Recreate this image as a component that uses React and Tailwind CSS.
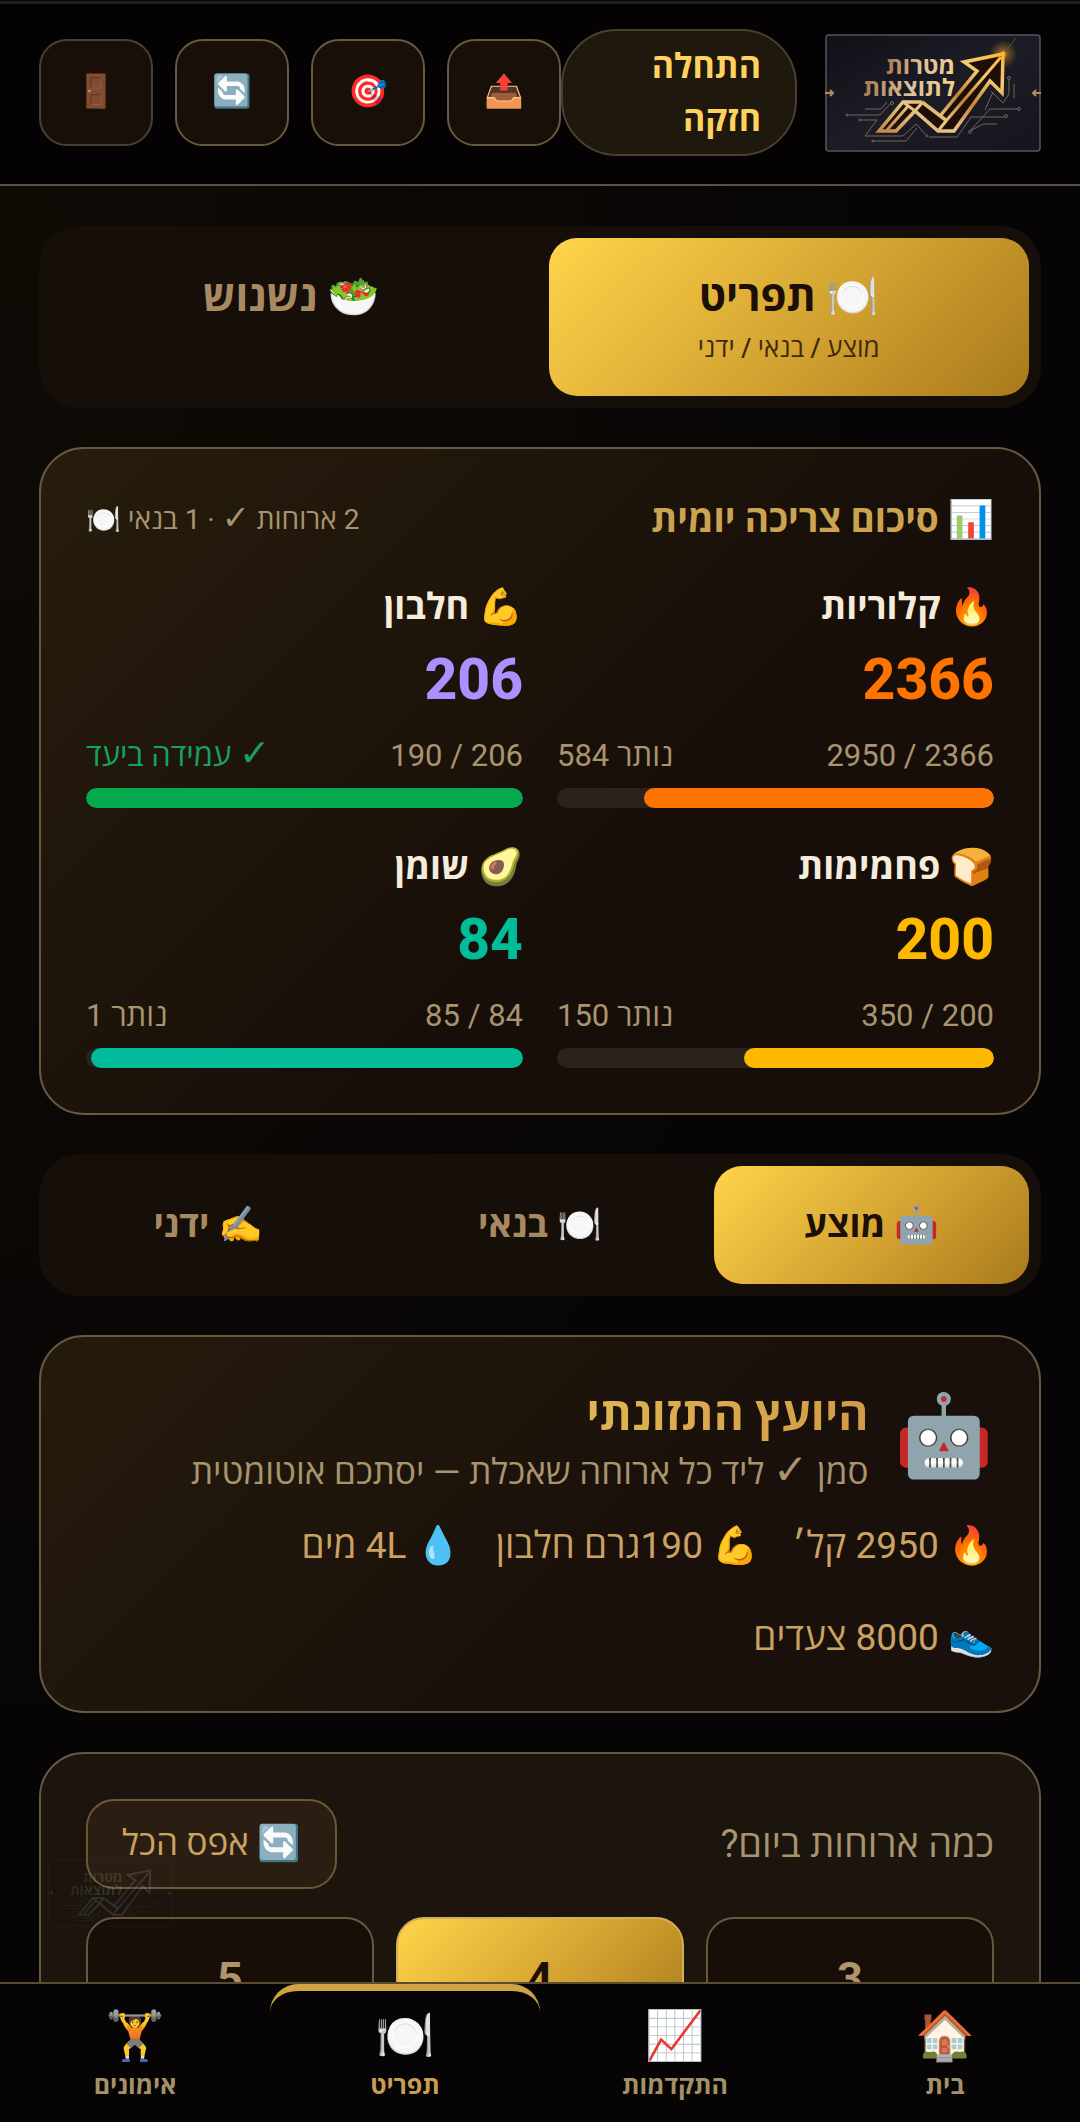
import React from "react";

const GOLD = "bg-linear-135 from-[#ffd54a] via-[#cf9e2f] via-60% to-[#a87a1c]";
const CARD = "rounded-[45px] border-2 border-[#675840] p-[45px]";

function Logo({ className, faint }) {
  return (
    <svg viewBox="0 0 216 118" className={className} role="img" aria-label="מטרות לתוצאות">
      <defs>
        <linearGradient id="panel" x1="0" y1="0" x2="1" y2="1">
          <stop offset="0" stopColor="#101117" />
          <stop offset="0.5" stopColor="#1b1c26" />
          <stop offset="1" stopColor="#14151d" />
        </linearGradient>
        <linearGradient id="metal" x1="0" y1="1" x2="1" y2="0">
          <stop offset="0" stopColor="#c08a4c" />
          <stop offset="0.3" stopColor="#ecc98a" />
          <stop offset="0.55" stopColor="#c08536" />
          <stop offset="0.8" stopColor="#f3cc72" />
          <stop offset="1" stopColor="#ffb52e" />
        </linearGradient>
        <linearGradient id="letters" x1="0" y1="0" x2="1" y2="0">
          <stop offset="0" stopColor="#a9774f" />
          <stop offset="0.5" stopColor="#dcc09a" />
          <stop offset="1" stopColor="#f0cf8b" />
        </linearGradient>
        <radialGradient id="flare">
          <stop offset="0" stopColor="#ffd978" />
          <stop offset="0.3" stopColor="#ffae2b" stopOpacity="0.4" />
          <stop offset="1" stopColor="#ff9a10" stopOpacity="0" />
        </radialGradient>
      </defs>
      <rect x="1" y="1" width="214" height="116" rx="3" fill={faint ? "none" : "url(#panel)"} stroke="#55565e" strokeWidth="1.5" />
      <g fill="none" stroke="#75665a" strokeWidth="1">
        <path d="M22 81H55L66 69M36 86H52L40 102H78L91 90L101 101M48 107H81L92 94M40 75H56L62 68M104 103H132L146 83H180M145 97L165 75M145 97L158 90H172M165 75H193M160 76L168 58M184 45V60L178 69L166 57M189 50V64" />
        <circle cx="67" cy="69" r="1.5" />
        <circle cx="22" cy="81" r="1" />
        <circle cx="35" cy="86" r="1" />
        <circle cx="48" cy="107" r="1" />
        <circle cx="102" cy="102" r="1" />
        <circle cx="145" cy="98" r="1.5" />
        <circle cx="181" cy="82" r="1.5" />
        <circle cx="194" cy="75" r="1.5" />
        <circle cx="184" cy="44" r="1.5" />
      </g>
      {!faint && <circle cx="178" cy="20" r="14" fill="url(#flare)" />}
      <g fill="none" stroke="url(#metal)" strokeWidth="3.5">
        <path fill="#1d0f08" d="M54 97L78 68H97L122 86L115 82L152 37L139 28L178 20L177 59L165 47L129 97H113L90 77L71 97Z" stroke="none" />
        <path d="M97 68H78L54 97H71L90 77L113 97H129L165 47L177 59L178 20L139 28L152 37L115 82M97 68L122 87" />
        <path d="M62 96L84 71M78 68L90 77L97 69M113 97L121 87L176 23" strokeWidth="3" />
      </g>
      {!faint && <path d="M180 18L191 4" stroke="#6b5030" strokeWidth="1" />}
      <path d="M0 59H8M5 56L8 59L5 62M216 59H208M211 56L208 59L211 62" stroke="#b78a58" strokeWidth="2" fill="none" />
      <g fill="url(#letters)" fontFamily="'Open Sans', sans-serif" fontWeight="700" fontSize="24" direction="rtl">
        <text x="130" y="40">מטרות</text>
        <text x="130" y="62">לתוצאות</text>
      </g>
    </svg>
  );
}

function Check() {
  return <span className="font-['DejaVu_Sans',sans-serif] text-[1.2em] leading-none font-bold">✓</span>;
}

function IconButton({ icon, label, dim }) {
  return (
    <button
      aria-label={label}
      className={
        "flex h-[107px] w-[114px] shrink-0 items-center justify-center rounded-[28px] border-2 bg-[#170f08] pb-1 text-[32px] " +
        (dim ? "border-[#4a4032]" : "border-[#675840]")
      }
    >
      <span className={dim ? "opacity-70" : ""}>{icon}</span>
    </button>
  );
}

function Tab({ icon, label, sub, active, big }) {
  return (
    <button
      role="tab"
      aria-selected={!!active}
      className={
        "flex flex-1 flex-col items-center rounded-[28px] leading-[54px] font-bold " +
        (big ? "pt-8 pb-7 text-[42px] " : "py-8 text-[36px] ") +
        (active ? GOLD + " text-[#1c0f06]" : "text-[#a88a62]")
      }
    >
      <span>{icon} {label}</span>
      {sub && <span className="mt-1 text-[26px] leading-10 font-medium text-[#3f290d]">{sub}</span>}
    </button>
  );
}

function Macro({ icon, label, value, goal, left, color, bar, done }) {
  return (
    <div>
      <div className="text-[36px] leading-[54px] font-bold text-[#f5ecdc]">{icon} {label}</div>
      <div className={"text-[57px] leading-[92px] font-extrabold " + color}>{value}</div>
      <div className="mt-[6px] flex justify-between text-[31px] leading-12 text-[#a8946e]">
        <span>{value} / {goal}</span>
        <span className={done ? "text-[#16a062]" : ""}>{done && <><Check /> </>}{left}</span>
      </div>
      <div className="mt-2 h-5 overflow-hidden rounded-full bg-[#2a231d]">
        <div className={"h-full rounded-full " + bar} style={{ width: Math.min(100, (value / goal) * 100) + "%" }} />
      </div>
    </div>
  );
}

function MealCount({ n, active }) {
  return (
    <button
      aria-pressed={!!active}
      className={
        "h-[124px] flex-1 rounded-[28px] border-2 text-[45px] font-bold " +
        (active ? GOLD + " border-[#d3ad58] text-[#1c0f06]" : "border-[#675840] bg-[#170e08] text-[#b0946c]")
      }
    >
      {n}
    </button>
  );
}

function NavItem({ icon, label, active }) {
  return (
    <a
      href="#"
      aria-current={active ? "page" : undefined}
      className={
        "flex flex-1 flex-col items-center rounded-t-[28px] border-t-[7px] pt-[13px] text-[25px] font-bold " +
        (active ? "border-[#cfa243] text-[#c99d52]" : "border-transparent text-[#a39168]")
      }
    >
      <span className="text-[48px] leading-[64px]">{icon}</span>
      <span className="leading-9">{label}</span>
    </a>
  );
}

export default function App() {
  return (
    <div
      dir="rtl"
      className="flex h-screen flex-col overflow-hidden bg-[#070405] bg-radial-[at_0%_10%] from-[#0f0c06] to-[#070405] to-60% pt-px font-['Roboto','Open_Sans','Noto_Color_Emoji',sans-serif]"
    >
      <header className="flex shrink-0 items-center justify-between border-t-3 border-b-2 border-t-[#1f1d21] border-b-[#5a5345] bg-[#050204] px-[39px] pt-[25px] pb-[28px]">
        <div className="flex items-center gap-7">
          <Logo className="w-[216px] shrink-0" />
          <div className="w-[236px] rounded-[56px] border-2 border-[#4b4030] bg-[#1e180d] pt-[9px] pr-[34px] pb-2 pl-[45px] text-[34px] leading-[53px] font-bold text-[#ffd15f]">
            התחלה<br />חזקה
          </div>
        </div>
        <div className="flex gap-[22px]">
          <IconButton icon="📤" label="שיתוף" />
          <IconButton icon="🎯" label="יעדים" />
          <IconButton icon="🔄" label="רענון" />
          <IconButton icon="🚪" label="יציאה" dim />
        </div>
      </header>

      <main className="relative flex min-h-0 flex-1 flex-col gap-[39px] overflow-hidden px-[39px] pt-10 *:shrink-0">
        <div role="tablist" className="flex gap-[17px] rounded-[40px] bg-[#150e09] p-3">
          <Tab big active icon="🍽️" label="תפריט" sub="מוצע / בנאי / ידני" />
          <Tab big icon="🥗" label="נשנוש" />
        </div>

        <section className={CARD + " bg-linear-135 from-[#271d0c] to-[#170e09] to-60%"}>
          <div className="mb-[34px] flex h-[52px] items-center justify-between">
            <h2 className="text-[37px] font-bold text-[#cba351]">📊 סיכום צריכה יומית</h2>
            <span className="text-[28px] text-[#a8946e]">2 ארוחות <Check /> · 1 בנאי 🍽️</span>
          </div>
          <div className="grid grid-cols-2 gap-x-[34px] gap-y-8">
            <Macro icon="🔥" label="קלוריות" value={2366} goal={2950} left="נותר 584" color="text-[#ff7300]" bar="bg-[#ff7300]" />
            <Macro icon="💪" label="חלבון" value={206} goal={190} left="עמידה ביעד" done color="text-[#a992ff]" bar="bg-[#05aa4e]" />
            <Macro icon="🍞" label="פחמימות" value={200} goal={350} left="נותר 150" color="text-[#ffb800]" bar="bg-[#ffb800]" />
            <Macro icon="🥑" label="שומן" value={84} goal={85} left="נותר 1" color="text-[#00bc98]" bar="bg-[#00bc98]" />
          </div>
        </section>

        <div role="tablist" className="flex gap-[17px] rounded-[40px] bg-[#150e09] p-3">
          <Tab active icon="🤖" label="מוצע" />
          <Tab icon="🍽️" label="בנאי" />
          <Tab icon="✍️" label="ידני" />
        </div>

        <section className={CARD + " bg-linear-135 from-[#251b0b] to-[#19100b] to-60%"}>
          <div className="flex items-start gap-[26px]">
            <span className="text-[80px] leading-[108px]">🤖</span>
            <div className="min-w-0 flex-1">
              <h2 className="bg-linear-90 from-[#ffe060] to-[#d09c48] bg-clip-text text-[46px] leading-[64px] font-bold text-transparent">היועץ התזונתי</h2>
              <p className="text-[35px] leading-[54px] text-[#a8946e]">סמן <Check /> ליד כל ארוחה שאכלת — יסתכם אוטומטית</p>
            </div>
          </div>
          <div className="mt-[18px] flex flex-wrap gap-x-[34px] gap-y-9 text-[37px] leading-[56px] text-[#cba264]">
            <span>🔥 2950 קל׳</span>
            <span>💪 190גרם חלבון</span>
            <span>💧 4L מים</span>
            <span>👟 8000 צעדים</span>
          </div>
        </section>

        <section className={CARD + " bg-[#1b150e]"}>
          <div className="mb-7 flex items-center justify-between">
            <h3 className="text-[38px] text-[#a8946e]">כמה ארוחות ביום?</h3>
            <button className="h-[90px] rounded-[28px] border-2 border-[#6e5736] bg-[#2a1e12] px-[34px] text-[35px] text-[#cba264]">🔄 אפס הכל</button>
          </div>
          <div className="flex gap-[22px]">
            <MealCount n="3" />
            <MealCount n="4" active />
            <MealCount n="5" />
          </div>
        </section>

        <Logo faint className="pointer-events-none absolute bottom-[55px] left-12 w-[124px] opacity-15 grayscale" />
      </main>

      <nav className="flex h-[140px] shrink-0 border-t-2 border-[#5c4c34] bg-[#070405]">
        <NavItem icon="🏠" label="בית" />
        <NavItem icon="📈" label="התקדמות" />
        <NavItem icon="🍽️" label="תפריט" active />
        <NavItem icon="🏋️" label="אימונים" />
      </nav>
    </div>
  );
}
